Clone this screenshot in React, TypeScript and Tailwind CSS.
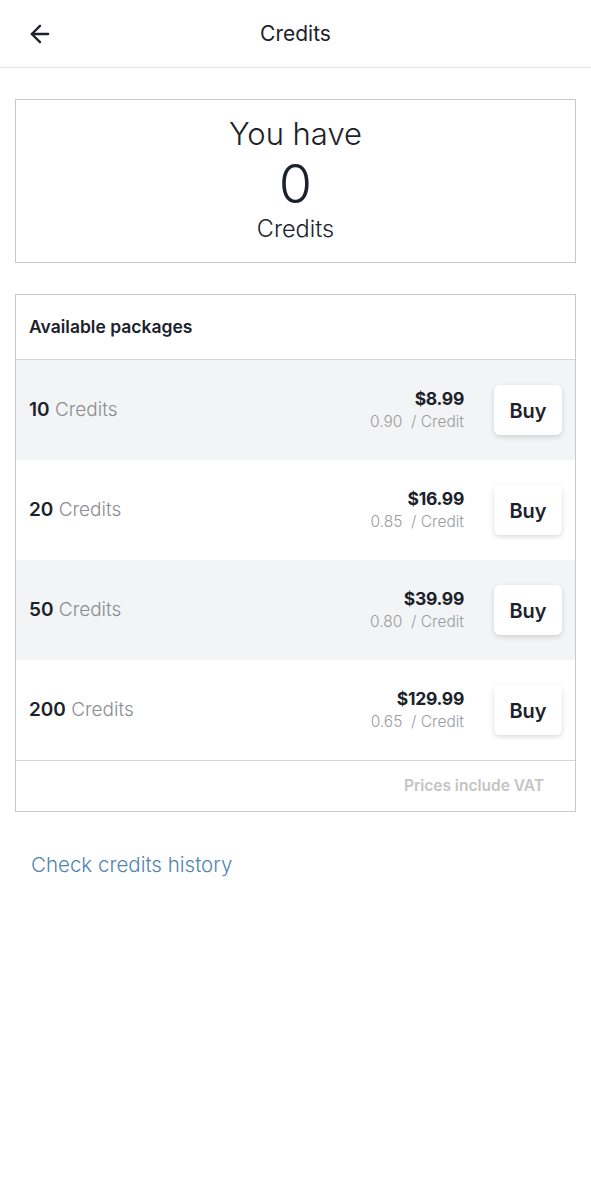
import { ArrowLeft } from 'lucide-react';

interface Pack {
  amount: number;
  price: string;
  perCredit: string;
}

const packs: Pack[] = [
  { amount: 10, price: '$8.99', perCredit: '0.90' },
  { amount: 20, price: '$16.99', perCredit: '0.85' },
  { amount: 50, price: '$39.99', perCredit: '0.80' },
  { amount: 200, price: '$129.99', perCredit: '0.65' },
];

const App = () => {
  return (
    <div className="min-h-[1178px] bg-white text-[#1c222b]" style={{ fontFamily: 'Inter, "Noto Sans", sans-serif' }}>
      <header className="relative flex h-[68px] items-center justify-center border-b border-[#e6e6e6]">
        <button className="absolute left-[26px] top-[20px] text-[#1c222b]">
          <ArrowLeft size={28} strokeWidth={2} />
        </button>
        <h1 className="text-[21px] font-normal">Credits</h1>
      </header>

      <div className="px-[15px] pt-[31px]">
        <div className="flex h-[164px] flex-col items-center border border-[#c9c9c9] pt-[13px]">
          <p className="text-[31px] leading-[42px] font-light">You have</p>
          <p className="text-[54px] leading-[58px] font-light">0</p>
          <p className="text-[23.5px] leading-[32px] font-light">Credits</p>
        </div>

        <div className="mt-[31px] border border-[#c9c9c9]">
          <div className="flex h-[65px] items-center border-b border-[#d6d6d6] px-[13px]">
            <h2 className="text-[17.5px] font-semibold">Available packages</h2>
          </div>
          {packs.map((p, i) => (
            <div
              key={p.amount}
              className={`flex h-[100px] items-center pl-[13px] pr-[13px] ${i % 2 === 0 ? 'bg-[#f2f4f6]' : 'bg-white'}`}
            >
              <p className="flex-1 text-[19px]">
                <span className="font-semibold">{p.amount}</span>{' '}
                <span className="font-light text-[#8a8d91]">Credits</span>
              </p>
              <div className="mr-[30px] flex flex-col items-end">
                <span className="text-[17.5px] leading-[24px] font-bold tracking-[-0.3px]">{p.price}</span>
                <span className="text-[15.5px] leading-[22px] font-light text-[#9a9ca0]">
                  {p.perCredit} &nbsp;/ Credit
                </span>
              </div>
              <button className="flex h-[50px] w-[68px] items-center justify-center rounded-[6px] bg-white pt-[2px] text-[20px] font-semibold shadow-[0_2px_5px_rgba(0,0,0,0.15)]">
                Buy
              </button>
            </div>
          ))}
          <div className="flex h-[51px] items-center justify-end border-t border-[#d6d6d6] pr-[31px]">
            <span className="text-[15.5px] font-semibold text-[#c4c4c4]">Prices include VAT</span>
          </div>
        </div>

        <a className="mt-[38px] block pl-[16px] text-[20.5px] font-light text-[#4f84b3]">Check credits history</a>
      </div>
    </div>
  );
};

export default App;
